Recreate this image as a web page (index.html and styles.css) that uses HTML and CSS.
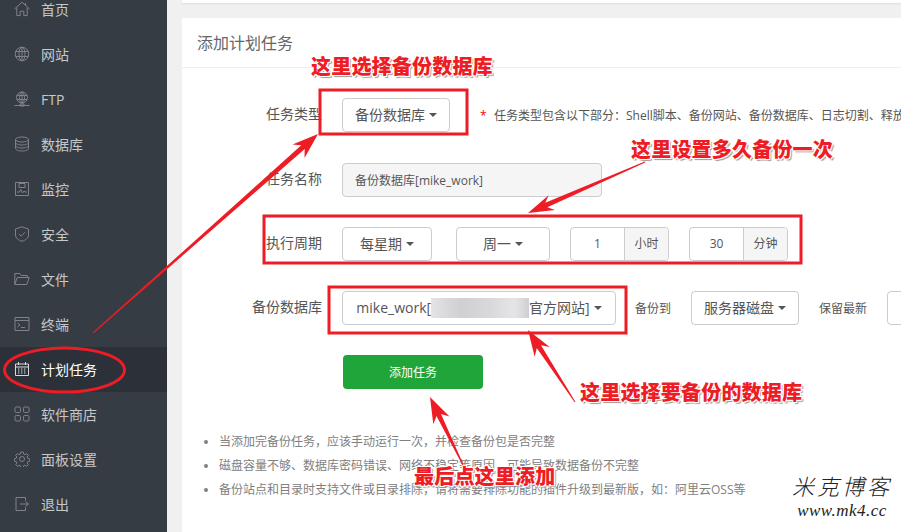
FILE: index.html
```html
<!DOCTYPE html>
<html lang="zh-CN">
<head>
    <meta charset="UTF-8">
    <meta name="viewport" content="width=device-width, initial-scale=1.0">
    <title>计划任务</title>
    <link rel="stylesheet" href="styles.css">
</head>
<body>
    <div class="layout">
        <div class="sidebar">
            <a class="nav-item">
                <svg class="nav-icon" viewBox="0 0 16 16"><path d="M.5 8 8 1.2 15.5 8M2.8 6.6v8h3.4v-4.4h3.6v4.4h3.4v-8M11.5 2v2"/></svg>
                首页
            </a>
            <a class="nav-item">
                <svg class="nav-icon" viewBox="0 0 16 16"><circle cx="8" cy="8" r="6.8"/><ellipse cx="8" cy="8" rx="3" ry="6.8"/><path d="M1.6 5.5h12.8M1.6 10.500h12.800M8 1.200v13.600"/></svg>
                网站
            </a>
            <a class="nav-item">
                <svg class="nav-icon" viewBox="0 0 16 16"><circle cx="8" cy="6.500" r="5.500"/><ellipse cx="8" cy="6.500" rx="2.500" ry="5.500"/><path d="M2.800 4.500h10.400M2.800 8.500h10.400M8 1v11M.5 14.500h15M6 13h4v2H6z"/></svg>
                FTP
            </a>
            <a class="nav-item">
                <svg class="nav-icon" viewBox="0 0 16 16"><ellipse cx="8" cy="3.500" rx="6.500" ry="2.500"/><path d="M1.500 3.500v9c0 1.400 2.900 2.500 6.500 2.500s6.500-1.100 6.500-2.500v-9M1.500 6.500C1.500 7.900 4.400 9 8 9s6.500-1.100 6.500-2.500M1.500 9.500C1.500 10.900 4.400 12 8 12s6.500-1.100 6.500-2.500"/></svg>
                数据库
            </a>
            <a class="nav-item">
                <svg class="nav-icon" viewBox="0 0 16 16"><path d="M1.500 1.500h13v13h-13zM5 2.500h6v4H5zM3 11h2.500l1.200-2.500L8.500 12l1.500-2 1 1h2"/></svg>
                监控
            </a>
            <a class="nav-item">
                <svg class="nav-icon" viewBox="0 0 16 16"><path d="M8 .8 14.500 3v6c0 3-3 5.200-6.500 6.300C4.500 14.200 1.500 12 1.500 9V3zM5 8l2.200 2.200L11 6.200"/></svg>
                安全
            </a>
            <a class="nav-item">
                <svg class="nav-icon" viewBox="0 0 16 16"><path d="M.8 13.500v-11h5l1.500 2h6v2M.8 13.500l2.400-7h12l-2.400 7z"/></svg>
                文件
            </a>
            <a class="nav-item">
                <svg class="nav-icon" viewBox="0 0 16 16"><path d="M1 1.500h14v13H1zM1 4.500h14M3.500 7l2.500 2-2.500 2M7 11.500h4"/></svg>
                终端
            </a>
            <a class="nav-item nav-active">
                <svg class="nav-icon" viewBox="0 0 16 16"><path d="M1.500 3h13v11.500h-13zM1.500 6h13M4.500 1v3M11.500 1v3"/><path class="cal-dots" d="M4 8h2M7 8h2M10 8h2M4 10h2M7 10h2M10 10h2M4 12h2M7 12h2M10 12h2"/></svg>
                计划任务
            </a>
            <a class="nav-item">
                <svg class="nav-icon" viewBox="0 0 16 16"><rect x="1" y="1" width="5.500" height="5.500" rx="1.200"/><rect x="9.500" y="1" width="5.500" height="5.500" rx="1.200"/><rect x="1" y="9.500" width="5.500" height="5.500" rx="1.200"/><rect x="9.500" y="9.500" width="5.500" height="5.500" rx="1.200"/></svg>
                软件商店
            </a>
            <a class="nav-item">
                <svg class="nav-icon" viewBox="0 0 16 16"><circle cx="8" cy="8" r="2.500"/><path d="M6.800 1h2.400l.4 2 1.300.6 1.800-1 1.600 1.700-1.100 1.700.5 1.300 2 .5v2.400l-2 .4-.5 1.300 1.100 1.800-1.700 1.600-1.700-1.100-1.300.5-.4 1.900H6.800l-.4-1.900-1.300-.5-1.700 1.100-1.700-1.600 1.100-1.800-.5-1.300-2-.4V7.800l2-.5.5-1.300-1.100-1.700 1.600-1.700 1.800 1 1.300-.6z"/></svg>
                面板设置
            </a>
            <a class="nav-item">
                <svg class="nav-icon" viewBox="0 0 16 16"><path d="M11.500 4.500v-3h-9.500v13h9.500v-3M6 8h8M11.500 5.500 14.500 8l-3 2.500"/></svg>
                退出
            </a>
        </div>

        <div class="main">
            <div class="top-card"></div>
            <div class="panel">
                <div class="panel-title">添加计划任务</div>
                <div class="form">
                    <div class="row row-type">
                        <label class="row-label">任务类型</label>
                        <button class="select select-type">备份数据库<i class="caret"></i></button>
                        <span class="hint"><b class="star">*</b>任务类型包含以下部分：Shell脚本、备份网站、备份数据库、日志切割、释放</span>
                    </div>
                    <div class="row">
                        <label class="row-label">任务名称</label>
                        <input class="name-input" type="text" value="备份数据库[mike_work]" disabled>
                    </div>
                    <div class="row">
                        <label class="row-label">执行周期</label>
                        <button class="select select-cycle">每星期<i class="caret"></i></button>
                        <button class="select select-week">周一<i class="caret"></i></button>
                        <div class="input-group">
                            <span class="group-value">1</span>
                            <span class="group-addon">小时</span>
                        </div>
                        <div class="input-group">
                            <span class="group-value">30</span>
                            <span class="group-addon">分钟</span>
                        </div>
                    </div>
                    <div class="row">
                        <label class="row-label">备份数据库</label>
                        <button class="select select-db">mike_work[<span class="blurred"></span>官方网站]<i class="caret"></i></button>
                        <span class="small-label">备份到</span>
                        <button class="select select-type">服务器磁盘<i class="caret"></i></button>
                        <span class="small-label">保留最新</span>
                        <span class="keep-input"></span>
                    </div>
                    <button class="submit">添加任务</button>
                </div>
                <ul class="tips">
                    <li>当添加完备份任务，应该手动运行一次，并检查备份包是否完整</li>
                    <li>磁盘容量不够、数据库密码错误、网络不稳定等原因，可能导致数据备份不完整</li>
                    <li>备份站点和目录时支持文件或目录排除，请将需要排除功能的插件升级到最新版，如：阿里云OSS等</li>
                </ul>
            </div>
        </div>

        <!-- annotations drawn on top of the screenshot -->
        <svg class="marks" viewBox="0 0 901 532">
            <g class="mark-lines">
                <rect x="320" y="90" width="147" height="44"/>
                <rect x="264" y="216" width="537" height="47"/>
                <rect x="329" y="287" width="297" height="46"/>
                <ellipse cx="64.500" cy="370" rx="60" ry="22"/>
            </g>
            <g class="mark-arrows">
                <polygon points="93.300,333.400 304.700,149.100 304.500,157.900 318,134 292.500,144.500 301.300,145.300 92.700,332.600"/>
                <polygon points="645.200,162.500 547.300,207.300 555,209.900 528,213 548.600,195.300 545.300,202.700 644.800,161.500"/>
                <polygon points="575.400,401.700 541,345.300 549.700,346.900 528,330 534.700,356.700 536.800,348.100 574.600,402.300"/>
                <polygon points="463.500,464.800 441,413.900 449.500,416.500 430,397 433.300,424.300 436.500,416.100 462.500,465.200"/>
            </g>
        </svg>
        <div class="note note-type">这里选择备份数据库</div>
        <div class="note note-cycle">这里设置多久备份一次</div>
        <div class="note note-db">这里选择要备份的数据库</div>
        <div class="note note-add">最后点这里添加</div>
        <div class="stamp">
            <div class="stamp-name">米克博客</div>
            <div class="stamp-url">www.mk4.cc</div>
        </div>
    </div>
</body>
</html>
```

FILE: styles.css
```css
* {
    margin: 0;
    padding: 0;
    box-sizing: border-box;
    font-family: "Open Sans", "Noto Sans CJK SC", sans-serif;
}

body {
    background: #f0f0f0;
    color: #555;
    overflow: hidden;
}

.layout {
    position: relative;
    display: flex;
    width: 901px;
    height: 532px;
    overflow: hidden;
}

.sidebar {
    width: 167px;
    flex-shrink: 0;
    background: #363c44;
}

.nav-item {
    display: flex;
    align-items: center;
    gap: 11px;
    height: 45px;
    padding: 0 0 1px 14px;
    font-size: 14px;
    color: #c6c8ca;
}

.nav-item:first-child {
    margin-top: -13px;
}

.nav-active {
    background: #2c3038;
    color: #fff;
}

.nav-icon {
    width: 16px;
    height: 16px;
    flex-shrink: 0;
    fill: none;
    stroke: #7e8389;
    stroke-width: 1;
}

.nav-active .nav-icon {
    stroke: #d8d9db;
}

.cal-dots {
    stroke-width: 1.200;
    stroke-dasharray: 1.400 .6;
}

.main {
    flex: 1;
    min-width: 0;
    padding-left: 15px;
}

.top-card {
    height: 3px;
    background: #fff;
    box-shadow: 0 1px 2px rgba(0, 0, 0, 0.08);
}

.panel {
    margin-top: 15px;
    height: 520px;
    background: #fff;
}

.panel-title {
    height: 50px;
    padding: 14px 15px 0;
    border-bottom: 1px solid #eee;
    font-size: 16px;
    line-height: 22px;
    color: #666;
}

.form {
    padding-top: 30px;
}

.row {
    display: flex;
    align-items: center;
    gap: 20px;
    height: 34px;
    margin-bottom: 30px;
    white-space: nowrap;
}

.row-type {
    margin-bottom: 31px;
    gap: 30px;
}

.row-label {
    width: 140px;
    flex-shrink: 0;
    padding-bottom: 2px;
    text-align: right;
    font-size: 14px;
    line-height: 20px;
    color: #555;
}

.row-type .row-label {
    margin-right: -10px;
}

.select {
    display: flex;
    align-items: center;
    justify-content: center;
    height: 34px;
    flex-shrink: 0;
    padding-bottom: 2px;
    background: #fff;
    border: 1px solid #ccc;
    border-radius: 4px;
    font-size: 14px;
    color: #555;
}

.caret {
    margin: 2px 0 0 4px;
    border-top: 4px solid #555;
    border-left: 4px solid transparent;
    border-right: 4px solid transparent;
}

.select-type {
    width: 108px;
}

.select-cycle {
    width: 90px;
    margin-right: 4px;
}

.select-week {
    width: 94px;
}

.select-db {
    width: 274px;
    margin-right: -1px;
}

.blurred {
    display: inline-block;
    width: 98px;
    height: 20px;
    margin-top: 2px;
    background: linear-gradient(90deg, #e4e3e5, #cfd0d2 30%, #d8d8da 60%, #e6e5e6 85%, #cfcfd2);
}

.hint {
    font-size: 12px;
    color: #555;
}

.star {
    display: inline-block;
    width: 14px;
    font-weight: normal;
    color: #ef0808;
}

.name-input {
    width: 260px;
    height: 34px;
    padding: 0 12px;
    background: #f5f5f5;
    border: 1px solid #ccc;
    border-radius: 4px;
    font-size: 12px;
    color: #555;
}

.input-group {
    display: flex;
    height: 34px;
    width: 99px;
    flex-shrink: 0;
    border: 1px solid #ccc;
    border-radius: 4px;
    font-size: 12px;
}

.group-value {
    flex: 1;
    line-height: 32px;
    text-align: center;
}

.group-addon {
    width: 44px;
    line-height: 32px;
    text-align: center;
    background: #f5f5f5;
    border-left: 1px solid #ccc;
    border-radius: 0 3px 3px 0;
}

.small-label {
    flex-shrink: 0;
    font-size: 12px;
    color: #555;
}

.keep-input {
    width: 60px;
    height: 34px;
    flex-shrink: 0;
    border: 1px solid #ccc;
    border-radius: 4px;
}

.submit {
    display: block;
    width: 140px;
    height: 34px;
    margin-left: 161px;
    background: #20a53a;
    border: none;
    border-radius: 4px;
    font-size: 12px;
    color: #fff;
}

.tips {
    margin-top: 41px;
    padding-left: 37px;
    font-size: 12px;
    line-height: 24px;
    color: #808080;
}

/* red marks over the page */
.marks {
    position: absolute;
    left: 0;
    top: 0;
    width: 901px;
    height: 532px;
}

.mark-lines {
    fill: none;
    stroke: #ee1c25;
    stroke-width: 3;
}

.mark-arrows {
    fill: #ee1c25;
}

.note {
    position: absolute;
    font-size: 20px;
    line-height: 24px;
    font-weight: 900;
    letter-spacing: .2px;
    white-space: nowrap;
    color: #ee1c25;
    text-shadow: 1px 1px 0 #fff, -1px -1px 0 #fff, 1px -1px 0 #fff, -1px 1px 0 #fff, 2px 2px 1px #999;
}

.note-type {
    left: 311px;
    top: 55px;
}

.note-cycle {
    left: 631px;
    top: 138px;
}

.note-db {
    left: 580px;
    top: 381px;
}

.note-add {
    left: 414px;
    top: 465px;
}

.stamp {
    position: absolute;
    left: 790px;
    top: 472px;
    width: 104px;
    text-align: center;
    color: #222;
}

.stamp-name {
    font-size: 22px;
    line-height: 28px;
    font-weight: 300;
    font-style: italic;
    letter-spacing: 3px;
    white-space: nowrap;
}

.stamp-url {
    font-family: "Liberation Serif", serif;
    font-size: 17px;
    line-height: 22px;
    font-style: italic;
    letter-spacing: .5px;
}
```
